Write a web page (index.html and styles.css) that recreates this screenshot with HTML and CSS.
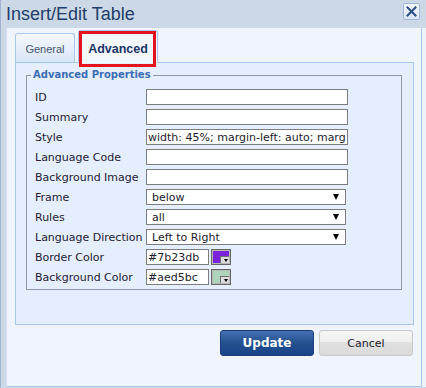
FILE: index.html
```html
<!DOCTYPE html>
<html lang="en">
<head>
  <meta charset="UTF-8">
  <title>Insert/Edit Table</title>
  <link rel="stylesheet" href="styles.css">
</head>
<body>
  <div class="dialog">
    <div class="titlebar">
      <span class="title">Insert/Edit Table</span>
      <button class="close-btn" title="Close">
        <svg width="15" height="15" viewBox="0 0 15 15">
          <path d="M3.5 3.5 L11.5 11.5 M11.5 3.5 L3.5 11.5" stroke="#2a4d86" stroke-width="2" stroke-linecap="square" fill="none"/>
        </svg>
      </button>
    </div>
    <div class="dialog-body">
      <div class="tabs">
        <div class="tab">General</div>
        <div class="tab tab-active">Advanced<span class="tab-mark"></span></div>
      </div>
      <div class="panel">
        <fieldset class="props-box">
          <legend>Advanced Properties</legend>
          <div class="props">
            <label>ID</label>
            <input type="text" class="field">
            <label>Summary</label>
            <input type="text" class="field">
            <label>Style</label>
            <input type="text" class="field" value="width: 45%; margin-left: auto; margin-right: auto;">
            <label>Language Code</label>
            <input type="text" class="field">
            <label>Background Image</label>
            <input type="text" class="field">
            <label>Frame</label>
            <div class="select-wrap"><select class="select"><option>below</option></select></div>
            <label>Rules</label>
            <div class="select-wrap"><select class="select"><option>all</option></select></div>
            <label>Language Direction</label>
            <div class="select-wrap"><select class="select"><option>Left to Right</option></select></div>
            <label>Border Color</label>
            <div class="color-row">
              <input type="text" class="field field-color" value="#7b23db">
              <span class="swatch swatch-purple"></span>
            </div>
            <label>Background Color</label>
            <div class="color-row">
              <input type="text" class="field field-color" value="#aed5bc">
              <span class="swatch swatch-green"></span>
            </div>
          </div>
        </fieldset>
      </div>
      <div class="actions">
        <button class="btn btn-update">Update</button>
        <button class="btn btn-cancel">Cancel</button>
      </div>
    </div>
  </div>
</body>
</html>
```

FILE: styles.css
```css
* {
  margin: 0;
  padding: 0;
  box-sizing: border-box;
}
body {
  width: 426px;
  height: 388px;
  overflow: hidden;
  font-family: 'DejaVu Sans', Verdana, sans-serif;
  font-size: 11px;
  color: #222;
  background: #cdd8e6;
}
.dialog {
  height: 388px;
  display: flex;
  flex-direction: column;
  background: #cdd8e6;
  border-left: 1px solid #9fb3cf;
}
.titlebar {
  height: 28px;
  flex-shrink: 0;
  display: flex;
  align-items: flex-start;
  justify-content: space-between;
  padding: 0 6px 0 5px;
}
.title {
  font-family: 'Liberation Sans', Arial, sans-serif;
  font-size: 18px;
  line-height: 18px;
  padding-top: 5px;
  color: #223e68;
}
.close-btn {
  margin-top: 3px;
  width: 17px;
  height: 17px;
  display: flex;
  align-items: center;
  justify-content: center;
  border: 1px solid #9db6d9;
  border-radius: 2px;
  background: linear-gradient(#f6f9fd, #dbe5f3);
}
.dialog-body {
  flex: 1;
  margin: 0 4px 1px 5px;
  padding: 2px 7px 0 8px;
  background: #f0f5fd;
  border: 1px solid #a8c6ee;
  border-top: none;
  border-left-color: #d3dff0;
  box-shadow: 4px 0 0 #eef3fa;
}
.tabs {
  height: 32px;
  display: flex;
  align-items: flex-end;
  gap: 3px;
}
.tab {
  width: 60px;
  height: 29px;
  display: flex;
  justify-content: center;
  align-items: center;
  padding-top: 2px;
  font-family: 'Liberation Sans', Arial, sans-serif;
  font-size: 11px;
  color: #44556d;
  border: 1px solid #a9c6ec;
  border-bottom: none;
  border-radius: 3px 3px 0 0;
  background: linear-gradient(#f5f8fe, #d9e6f7);
}
.tab-active {
  position: relative;
  z-index: 1;
  width: 80px;
  height: 33px;
  margin-bottom: -1px;
  padding-top: 3px;
  font-size: 12.5px;
  font-weight: bold;
  color: #1d3566;
  background: #f2f7fe;
}
.tab-mark {
  position: absolute;
  left: 0;
  top: 0;
  width: 77px;
  height: 36px;
  border: 3px solid #e3141d;
}
.panel {
  height: 263px;
  padding: 6px 11px 0 10px;
  background: #e4eefc;
  border: 1px solid #a8c6ee;
}
.props-box {
  border: 1px solid #8f99a5;
  padding: 8px 8px 4px 8px;
  min-width: 0;
}
.props-box legend {
  margin-left: -4px;
  padding: 0 2px;
  font-size: 10px;
  line-height: 12px;
  font-weight: bold;
  color: #3b6db5;
}
.props {
  display: grid;
  grid-template-columns: 111px 1fr;
  grid-auto-rows: 16px;
  row-gap: 4px;
  align-items: center;
}
.props label {
  color: #241a33;
  white-space: nowrap;
}
.field {
  width: 202px;
  height: 16px;
  padding: 0 1px;
  font-family: 'DejaVu Sans', Verdana, sans-serif;
  font-size: 11px;
  color: #1c1c2a;
  background: #fff;
  border: 1px solid #7d7d7d;
  outline: none;
}
.select-wrap {
  position: relative;
  width: 200px;
  height: 16px;
}
.select-wrap::after {
  content: '';
  position: absolute;
  right: 7px;
  top: 5px;
  border-left: 3.5px solid transparent;
  border-right: 3.5px solid transparent;
  border-top: 6px solid #000;
}
.select {
  appearance: none;
  -webkit-appearance: none;
  width: 200px;
  height: 16px;
  padding: 0 0 0 5px;
  font-family: 'DejaVu Sans', Verdana, sans-serif;
  font-size: 11px;
  color: #1c1c2a;
  background: #fff;
  border: 1px solid #7d7d7d;
  border-radius: 0;
  outline: none;
}
.color-row {
  display: flex;
  gap: 2px;
  height: 16px;
}
.field-color {
  width: 63px;
}
.swatch {
  position: relative;
  width: 20px;
  height: 16px;
  border: 1px solid #666;
  box-shadow: inset 0 0 0 1px #b8b8b8;
}
.swatch-purple { background: #7b23db; }
.swatch-green { background: #aed5bc; }
.swatch::after {
  content: '';
  position: absolute;
  right: 1px;
  bottom: 1px;
  width: 8px;
  height: 6px;
  background: #dcdcdc;
  border-top: 1px solid #707070;
  border-left: 1px solid #707070;
}
.swatch::before {
  content: '';
  position: absolute;
  z-index: 1;
  right: 2px;
  bottom: 2px;
  border-left: 2.5px solid transparent;
  border-right: 2.5px solid transparent;
  border-top: 3px solid #000;
}
.actions {
  display: flex;
  justify-content: flex-end;
  gap: 5px;
  margin-top: 5px;
  padding-right: 1px;
}
.btn {
  width: 94px;
  height: 26px;
  border-radius: 3px;
  font-family: 'DejaVu Sans', Verdana, sans-serif;
  cursor: pointer;
}
.btn-update {
  font-size: 12px;
  font-weight: bold;
  color: #fff;
  border: 1px solid #1b3e7a;
  background: linear-gradient(#4771b4, #23508f 50%, #1a438a);
}
.btn-cancel {
  font-size: 11px;
  color: #1e1a2a;
  border: 1px solid #c9c9c9;
  background: linear-gradient(#f6f6f6, #efefef 45%, #e0e0e0 46%, #dadada);
}
```
